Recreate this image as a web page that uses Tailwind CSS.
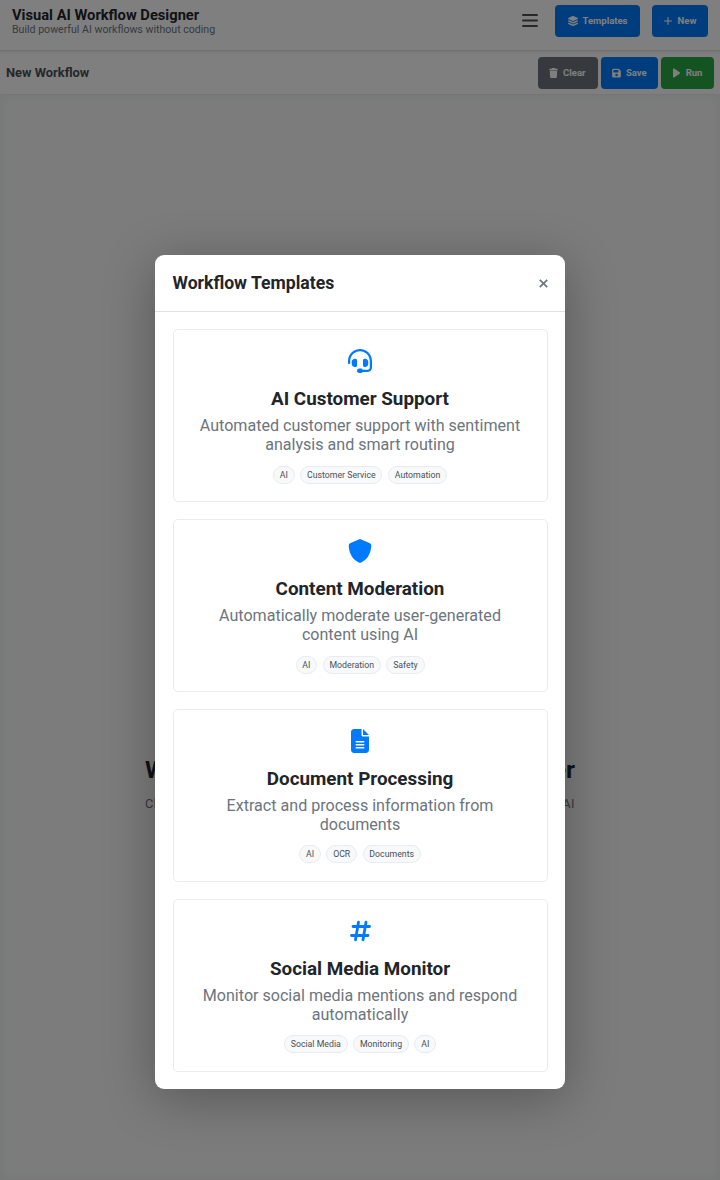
<!DOCTYPE html>
<html lang="en">
<head>
<meta charset="utf-8">
<title>Visual AI Workflow Designer</title>
<script src="https://cdn.jsdelivr.net/npm/@tailwindcss/browser@4"></script>
</head>
<body class="relative h-[1180px] w-[720px] overflow-hidden bg-white font-['Roboto',sans-serif] text-[#212529]">
<div class="flex h-full flex-col">
  <header class="z-10 flex h-[51px] shrink-0 items-start justify-between border-b border-[#e3e5e8] bg-white pr-3 pl-3 shadow-[0_1px_3px_rgba(0,0,0,0.1)]">
    <div class="pt-[7px]">
      <h1 class="text-[14.7px] leading-[17px] font-bold">Visual AI Workflow Designer</h1>
      <p class="text-[10.58px] leading-[12px] text-[#6c757d]">Build powerful AI workflows without coding</p>
    </div>
    <div class="flex items-center pt-[5px]">
      <svg class="mr-[17px] h-[14px] w-4" viewBox="0 0 16 14" stroke="#495057" stroke-width="2" stroke-linecap="round"><path d="M1 1h14M1 6.500h14M1 12h14"/></svg>
      <button class="mr-3 flex h-8 w-[85px] items-center justify-center gap-[5px] rounded bg-[#007bff] text-[9.5px] font-bold text-white"><svg class="size-[10px]" viewBox="0 0 512 512" fill="currentColor"><path d="M233 6q23-10 46 0l219 101q14 7 14 21t-14 21L279 251q-23 10-46 0L14 150Q0 142 0 128t14-21ZM48 216l172 80q36 16 72 0l172-80 34 16q14 8 14 24t-14 22L279 379q-23 10-46 0L14 278Q0 270 0 256t14-24ZM48 344l172 80q36 16 72 0l172-80 34 16q14 8 14 24t-14 22L279 507q-23 10-46 0L14 406Q0 398 0 384t14-24Z"/></svg>Templates</button>
      <button class="flex h-8 w-14 items-center justify-center gap-[6px] rounded bg-[#007bff] text-[9.5px] font-bold text-white"><svg class="size-2" viewBox="0 0 8 8" stroke="currentColor" stroke-width="1.1" stroke-linecap="round"><path d="M4 .5v7M.5 4h7"/></svg>New</button>
    </div>
  </header>
  <section class="flex h-11 shrink-0 items-center justify-between border-b border-[#e9ecef] bg-white pr-[6px] pl-[6px]">
    <h2 class="pt-px text-[12.9px] font-bold text-[#495057]">New Workflow</h2>
    <div class="flex gap-[3px]">
      <button class="flex h-8 w-[59.500px] items-center justify-center gap-[5px] rounded bg-[#6c757d] pr-px pt-px text-[9.5px] font-bold text-white"><svg class="mb-px h-[10px] w-[9px]" viewBox="0 0 448 512" fill="currentColor"><path d="M135 18Q144 0 164 0h120q20 0 29 18l7 14h96q32 0 32 32t-32 32H32Q0 96 0 64t32-32h96ZM32 128h384l-21 339q-3 45-48 45H101q-45 0-48-45Z"/></svg>Clear</button>
      <button class="flex h-8 w-[57.500px] items-center justify-center gap-[5px] rounded bg-[#007bff] pt-px text-[9.5px] font-bold text-white"><svg class="mb-px h-[10px] w-[9px]" viewBox="0 0 448 512" fill="currentColor"><path fill-rule="evenodd" d="M64 32h246q26 0 45 19l74 74q19 19 19 45v246q0 64-64 64H64q-64 0-64-64V96q0-64 64-64Zm0 96v64q0 32 32 32h192q32 0 32-32v-64q0-32-32-32H96q-32 0-32 32Zm160 160a64 64 0 1 0 0 128a64 64 0 1 0 0-128Z"/></svg>Save</button>
      <button class="flex h-8 w-[53px] items-center justify-center gap-[6px] rounded bg-[#28a745] pt-px text-[9.5px] font-bold text-white"><svg class="mb-px h-[10px] w-[7px]" viewBox="0 0 7 10" fill="currentColor"><path d="M0 1.2Q0 0 1.1.6L6.6 4.3Q7.3 5 6.6 5.7L1.1 9.4Q0 10 0 8.8Z"/></svg>Run</button>
    </div>
  </section>
  <main class="flex grow flex-col items-center bg-[#f8f9fa] pt-[659px] shadow-[inset_0_0_12px_rgba(0,0,0,0.06)]">
    <h2 class="w-[430px] text-center text-[24.5px] leading-[32px] font-bold whitespace-nowrap [text-align-last:justify]">Welcome to AI Workflow Designer</h2>
    <p class="mt-[9px] w-[430px] text-[12.8px] leading-[18px] tracking-[0.5px] whitespace-nowrap text-[#6c757d] [text-align-last:justify]">Choose a template to build workflows with AI</p>
  </main>
</div>

<div class="absolute inset-0 z-20 flex items-start justify-center bg-black/50 pt-[255px]">
  <div class="h-[834px] w-[410px] rounded-[9px] bg-white shadow-[0_9px_52px_rgba(0,0,0,0.3)]">
    <div class="flex h-[57px] items-center justify-between border-b border-[#dee2e6] px-[17.5px]">
      <h2 class="text-[17.6px] font-bold">Workflow Templates</h2>
      <svg class="size-[9px]" viewBox="0 0 8 8" stroke="#6c757d" stroke-width="1.500"><path d="M.7.7l6.6 6.6M7.3.7L.7 7.3"/></svg>
    </div>
    <div class="flex flex-col gap-[17.5px] px-[17.5px] pt-[17.450px]">
      <article class="flex h-[172.4px] flex-col items-center rounded-[5px] border border-[#e9ecef] pt-[18.500px] text-center">
        <svg class="size-[24px] text-[#007bff]" viewBox="0 0 512 512" fill="currentColor"><path d="M256 48C141.1 48 48 141.1 48 256v40c0 13.300-10.700 24-24 24s-24-10.700-24-24V256C0 114.600 114.600 0 256 0S512 114.600 512 256V400.100c0 48.600-39.400 88-88.100 88L313.600 488c-8.300 14.300-23.800 24-41.600 24H240c-26.500 0-48-21.500-48-48s21.500-48 48-48h32c17.800 0 33.300 9.700 41.600 24l110.400 .1c22.100 0 40-17.900 40-40V256c0-114.900-93.100-208-208-208zM144 208h16c17.700 0 32 14.300 32 32V352c0 17.700-14.300 32-32 32H144c-35.300 0-64-28.700-64-64V272c0-35.300 28.700-64 64-64zm224 0c35.300 0 64 28.700 64 64v48c0 35.300-28.700 64-64 64H352c-17.700 0-32-14.300-32-32V240c0-17.700 14.300-32 32-32h16z"/></svg>
        <h3 class="mt-[14px] text-[18.85px] leading-[24px] font-bold">AI Customer Support</h3>
        <p class="mt-[5px] text-[16.080px] leading-[19px] text-[#6c757d]">Automated customer support with sentiment<br>analysis and smart routing</p>
        <div class="mt-[12px] flex gap-[5.500px] text-[8.75px] leading-[10px] text-[#495057]"><span class="rounded-full border border-[#e9ecef] bg-[#f8f9fa] px-[5.800px] py-[3px]">AI</span><span class="rounded-full border border-[#e9ecef] bg-[#f8f9fa] px-[5.800px] py-[3px]">Customer Service</span><span class="rounded-full border border-[#e9ecef] bg-[#f8f9fa] px-[5.800px] py-[3px]">Automation</span></div>
      </article>
      <article class="flex h-[172.4px] flex-col items-center rounded-[5px] border border-[#e9ecef] pt-[18.500px] text-center">
        <svg class="size-[24px] text-[#007bff]" viewBox="0 0 512 512" fill="currentColor"><path d="M256 0c4.600 0 9.200 1 13.400 2.900L457.700 82.800c22 9.300 38.400 31 38.300 57.200c-.5 99.200-41.300 280.700-213.600 363.200c-16.700 8-36.100 8-52.800 0C57.300 420.700 16.500 239.200 16 140c-.1-26.200 16.300-47.900 38.300-57.200L242.700 2.900C246.800 1 251.400 0 256 0z"/></svg>
        <h3 class="mt-[14px] text-[18.85px] leading-[24px] font-bold">Content Moderation</h3>
        <p class="mt-[5px] text-[16.080px] leading-[19px] text-[#6c757d]">Automatically moderate user-generated<br>content using AI</p>
        <div class="mt-[12px] flex gap-[5.500px] text-[8.75px] leading-[10px] text-[#495057]"><span class="rounded-full border border-[#e9ecef] bg-[#f8f9fa] px-[5.800px] py-[3px]">AI</span><span class="rounded-full border border-[#e9ecef] bg-[#f8f9fa] px-[5.800px] py-[3px]">Moderation</span><span class="rounded-full border border-[#e9ecef] bg-[#f8f9fa] px-[5.800px] py-[3px]">Safety</span></div>
      </article>
      <article class="flex h-[172.4px] flex-col items-center rounded-[5px] border border-[#e9ecef] pt-[18.500px] text-center">
        <svg class="h-[24px] w-[18px] text-[#007bff]" viewBox="0 0 384 512" fill="currentColor"><path d="M64 0C28.700 0 0 28.700 0 64V448c0 35.300 28.700 64 64 64H320c35.300 0 64-28.700 64-64V160H256c-17.700 0-32-14.300-32-32V0H64zM256 0V128H384L256 0zM112 256H272c8.800 0 16 7.200 16 16s-7.200 16-16 16H112c-8.800 0-16-7.200-16-16s7.200-16 16-16zm0 64H272c8.800 0 16 7.200 16 16s-7.200 16-16 16H112c-8.800 0-16-7.200-16-16s7.200-16 16-16zm0 64H272c8.800 0 16 7.200 16 16s-7.200 16-16 16H112c-8.800 0-16-7.200-16-16s7.200-16 16-16z"/></svg>
        <h3 class="mt-[14px] text-[18.85px] leading-[24px] font-bold">Document Processing</h3>
        <p class="mt-[5px] text-[16.080px] leading-[19px] text-[#6c757d]">Extract and process information from<br>documents</p>
        <div class="mt-[11.500px] flex gap-[5.500px] text-[8.75px] leading-[10px] text-[#495057]"><span class="rounded-full border border-[#e9ecef] bg-[#f8f9fa] px-[5.800px] py-[3px]">AI</span><span class="rounded-full border border-[#e9ecef] bg-[#f8f9fa] px-[5.800px] py-[3px]">OCR</span><span class="rounded-full border border-[#e9ecef] bg-[#f8f9fa] px-[5.800px] py-[3px]">Documents</span></div>
      </article>
      <article class="flex h-[172.4px] flex-col items-center rounded-[5px] border border-[#e9ecef] pt-[18.500px] text-center">
        <svg class="h-[24px] w-[21px] text-[#007bff]" viewBox="0 0 448 512" fill="none" stroke="currentColor" stroke-width="60" stroke-linecap="round"><path d="M181 69L117 443M341 69L277 443M64 160H416M32 352H384"/></svg>
        <h3 class="mt-[14px] text-[18.85px] leading-[24px] font-bold">Social Media Monitor</h3>
        <p class="mt-[5px] text-[16.080px] leading-[19px] text-[#6c757d]">Monitor social media mentions and respond<br>automatically</p>
        <div class="mt-[11.500px] flex gap-[5.500px] text-[8.75px] leading-[10px] text-[#495057]"><span class="rounded-full border border-[#e9ecef] bg-[#f8f9fa] px-[5.800px] py-[3px]">Social Media</span><span class="rounded-full border border-[#e9ecef] bg-[#f8f9fa] px-[5.800px] py-[3px]">Monitoring</span><span class="rounded-full border border-[#e9ecef] bg-[#f8f9fa] px-[5.800px] py-[3px]">AI</span></div>
      </article>
    </div>
  </div>
</div>
</body>
</html>
